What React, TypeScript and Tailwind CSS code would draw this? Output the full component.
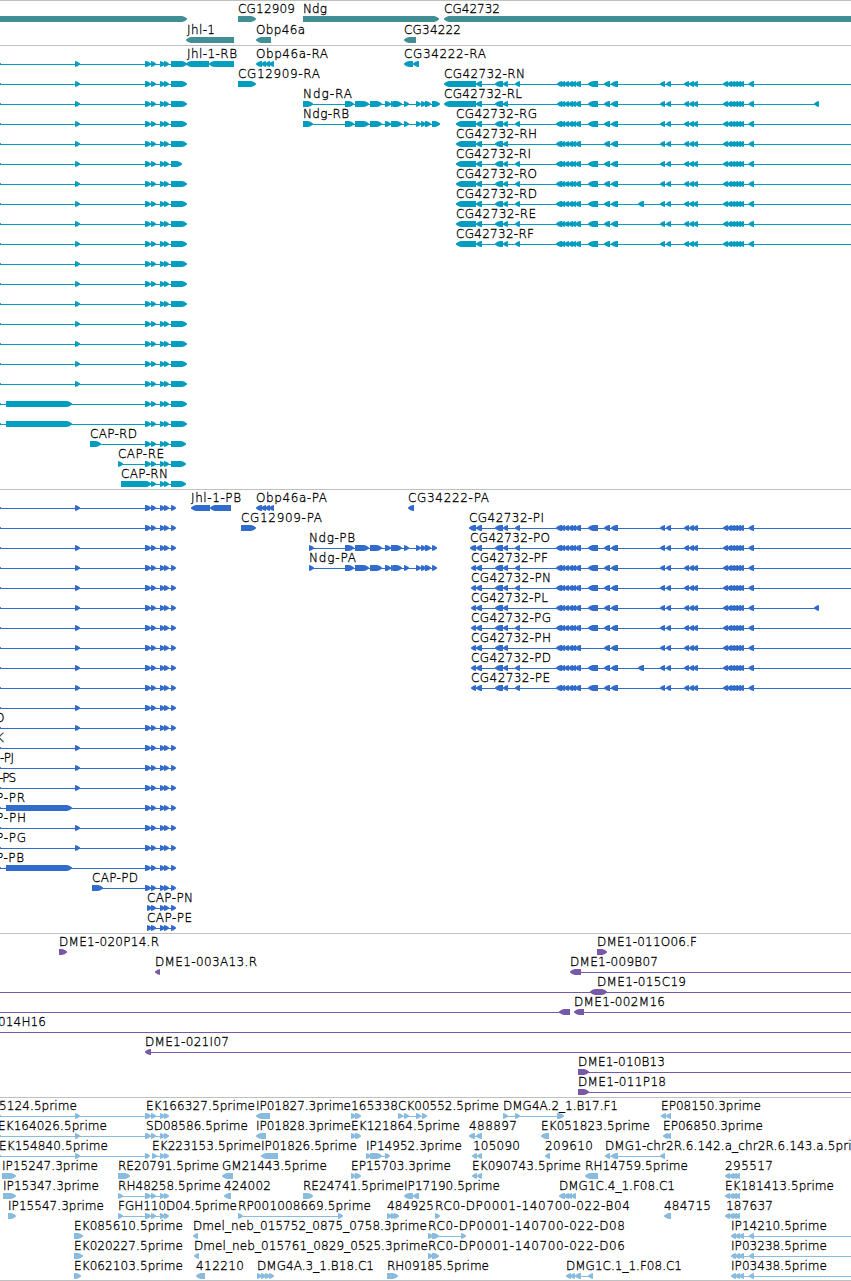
type Dir = 'r' | 'l' | 'b';

type Feature = {
  label?: string;
  // left edge and drawn width of the label
  at?: [number, number];
  dir: Dir;
  line?: [number, number];
  exons: number[][];
};

type Row = Feature[];

const WIDTH = 851;

const f = (
  label: string,
  x: number,
  end: number,
  dir: Dir,
  exons: number[][],
  line?: [number, number],
): Feature => ({ label, at: [x, end - x], dir, exons, line });

const g = (dir: Dir, exons: number[][], line?: [number, number]): Feature => ({ dir, exons, line });

// --- shared exon sets ---
const capMid = [[145, 151], [151, 156], [160, 165], [164, 169]];
const cap = (end: number) => g('r', [[-4, 1], [75, 80], ...capMid, [171, end]], [0, end - 2]);
const capBlock = (end: number) => g('r', [[-4, 1], [6, 72], ...capMid, [171, end]], [0, end - 2]);

const obp = [[256, 262], [261, 266], [265, 270], [269, 274]];
const ndgMid = [[345, 354], [355, 369], [370, 382], [385, 391]];
const ndgTail = [[404, 409], [416, 421], [421, 426], [425, 431]];
const ndgSplit = [[391, 396], [393, 402]];

const cgTail = [
  [604, 610], [611, 618], [660, 665], [666, 671], [684, 689], [689, 694], [693, 698],
  [723, 728], [727, 732], [730, 735], [733, 738], [736, 741], [739, 744], [748.5, 754],
];
const cgCluster = [[560, 565], [564, 569], [568, 573], [571, 576], [575, 581]];

const cg = (
  name: string,
  x: number,
  end: number,
  first: number[][],
  opts: { noSmall?: boolean; noBlock?: boolean; extra?: number[]; stop?: number; cluster?: number } = {},
): Feature =>
  f(
    name, x, end, 'l',
    [
      ...first,
      [476, 482], [495, 503], [503, 508],
      ...(opts.noSmall ? [] : [[515, 520]]),
      [opts.cluster ?? 556, 562],
      ...cgCluster,
      ...(opts.noBlock ? [] : [[588, 598]]),
      ...cgTail,
      ...(opts.extra ? [opts.extra] : []),
    ],
    [first[0][0] + 2, opts.stop ?? WIDTH],
  );

const genes: Row[] = [
  [
    g('r', [[-9, 187]]),
    f('CG12909', 238, 295, 'r', [[238, 256]]),
    f('Ndg', 303, 327, 'r', [[303, 439]]),
    f('CG42732', 444, 500, 'l', [[444, 860]]),
  ],
  [
    f('Jhl-1', 187, 215, 'l', [[186, 234]]),
    f('Obp46a', 256, 305, 'l', [[256, 271]]),
    f('CG34222', 404, 461, 'l', [[404, 416]]),
  ],
];

const transcripts: Row[] = [
  [
    cap(187),
    f('Jhl-1-RB', 187, 237, 'l', [[186, 209], [209, 234]]),
    f('Obp46a-RA', 256, 328, 'l', obp),
    f('CG34222-RA', 404, 486, 'l', [[404, 413], [413, 419]]),
  ],
  [cap(187), f('CG12909-RA', 238, 320, 'r', [[238, 256]]), cg('CG42732-RN', 444, 525, [[444, 476]], { cluster: 557 })],
  [
    cap(187),
    f('Ndg-RA', 303, 352, 'r', [[303, 313], ...ndgMid, ...ndgSplit, ...ndgTail, [432, 440]], [303, 438]),
    cg('CG42732-RL', 444, 522, [[444, 476]], { noSmall: true, extra: [814, 819], stop: 819, cluster: 557 }),
  ],
  [
    cap(187),
    f('Ndg-RB', 303, 349, 'r', [[303, 313], ...ndgMid, [391, 402], ...ndgTail, [432, 440]], [303, 438]),
    cg('CG42732-RG', 456, 537, [[456, 476]]),
  ],
  [cap(187), cg('CG42732-RH', 456, 537, [[456, 476]], { noSmall: true, noBlock: true })],
  [cap(182), cg('CG42732-RI', 456, 531, [[456, 476]])],
  [cap(187), cg('CG42732-RO', 456, 537, [[456, 476]])],
  [cap(187), cg('CG42732-RD', 456, 537, [[456, 476]], { extra: [638, 644] })],
  [cap(187), cg('CG42732-RE', 456, 536, [[456, 476]])],
  [cap(187), cg('CG42732-RF', 456, 534, [[456, 476]])],
  [cap(187)],
  [cap(187)],
  [cap(187)],
  [cap(187)],
  [cap(187)],
  [cap(187)],
  [cap(187)],
  [capBlock(187)],
  [capBlock(187)],
  [f('CAP-RD', 90, 137, 'r', [[90, 101], ...capMid, [171, 186]], [90, 184])],
  [f('CAP-RE', 118, 164, 'r', [[118, 123], ...capMid, [171, 186]], [118, 184])],
  [f('CAP-RN', 121, 168, 'r', [[121, 151], ...capMid, [171, 186]], [121, 184])],
];

const ndgP = (name: string, end: number, mid: number[][]) =>
  f(name, 309, end, 'r', [[309, 314], ...ndgMid, ...mid, ...ndgTail, [432, 437]], [309, 436]);

const capLabelled = (text: string, x: number, end: number, block = false): Feature => ({
  ...(block ? capBlock(176) : cap(176)),
  label: text,
  at: [x, end - x],
});

const proteins: Row[] = [
  [
    cap(176),
    f('Jhl-1-PB', 191, 241, 'l', [[191, 210], [210, 231]]),
    f('Obp46a-PA', 256, 327, 'l', obp),
    f('CG34222-PA', 408, 489, 'l', [[408, 414]]),
  ],
  [
    g('r', [[-4, 1], ...capMid, [171, 176]], [0, 174]),
    f('CG12909-PA', 241, 322, 'r', [[241, 256]]),
    cg('CG42732-PI', 469, 544, [[469, 476]]),
  ],
  [cap(176), ndgP('Ndg-PB', 355, [[391, 402]]), cg('CG42732-PO', 470, 550, [[470, 476]])],
  [cap(176), ndgP('Ndg-PA', 356, ndgSplit), cg('CG42732-PF', 471, 548, [[471, 476]])],
  [cap(176), cg('CG42732-PN', 471, 551, [[471, 476]])],
  [cap(176), cg('CG42732-PL', 471, 548, [[471, 476]], { noSmall: true, extra: [814, 819], stop: 819 })],
  [cap(176), cg('CG42732-PG', 471, 551, [[471, 476]])],
  [cap(176), cg('CG42732-PH', 471, 551, [[471, 476]], { noSmall: true, noBlock: true })],
  [cap(176), cg('CG42732-PD', 471, 551, [[471, 476]], { extra: [638, 644] })],
  [cap(176), cg('CG42732-PE', 471, 550, [[471, 476]])],
  [cap(176)],
  [capLabelled('O', -5, 5)],
  [capLabelled('K', -4, 4)],
  [capLabelled('-PJ', 0, 14)],
  [capLabelled('-PS', -1, 16)],
  [capLabelled('P-PR', -4, 25, true)],
  [capLabelled('P-PH', -4, 26)],
  [capLabelled('P-PG', -4, 26)],
  [capLabelled('P-PB', -4, 24, true)],
  [f('CAP-PD', 92, 138, 'r', [[92, 103], ...capMid, [171, 176]], [92, 174])],
  [f('CAP-PN', 147, 193, 'r', [[147, 152], ...capMid.slice(1), [171, 176]], [147, 174])],
  [f('CAP-PE', 147, 192, 'r', [[147, 152], ...capMid.slice(1), [171, 176]], [147, 174])],
];

const clones: Row[] = [
  [f('DME1-020P14.R', 59, 159, 'r', [[59, 67]]), f('DME1-011O06.F', 597, 697, 'r', [[597, 607]])],
  [f('DME1-003A13.R', 155, 257, 'l', [[155, 160]]), f('DME1-009B07', 570, 658, 'l', [[570, 581]], [572, WIDTH])],
  [f('DME1-015C19', 597, 686, 'b', [[590, 607]], [0, WIDTH])],
  [g('l', [[559, 570]], [0, 570]), f('DME1-002M16', 574, 665, 'l', [[574, 584]], [576, WIDTH])],
  [f('014H16', -2, 46, 'r', [], [0, WIDTH])],
  [f('DME1-021I07', 145, 229, 'l', [[145, 151]], [147, WIDTH])],
  [f('DME1-010B13', 578, 665, 'r', [[578, 589]], [578, WIDTH])],
  [f('DME1-011P18', 578, 666, 'r', [[578, 589]], [578, WIDTH])],
];

const pair351 = [[351, 356], [355, 361]];
const left725 = [[725, 730], [729, 734], [732, 737], [735, 740]];
const ip731 = [[731, 736], [735, 740], [739, 744], [749, 754]];

const ests: Row[] = [
  [
    f('5124.5prime', -1, 77, 'r', [[-4, 1], [75, 80]], [0, 145]),
    f('EK166327.5prime', 146, 255, 'r', capMid, [145, 168]),
    f('IP01827.3prime', 256, 351, 'l', [[256, 270]]),
    f('165338', 351, 398, 'r', pair351),
    f('CK00552.5prime', 398, 499, 'r', [[398, 403], [404, 409], [416, 421], [422, 427]], [398, 425]),
    f('DMG4A.2_1.B17.F1', 503, 618, 'r', [[503, 508], [515, 520], [557, 562], [558, 564]], [503, 562]),
    f('EP08150.3prime', 661, 761, 'l', [[661, 666], [666, 671]]),
  ],
  [
    f('EK164026.5prime', -2, 107, 'r', [[-4, 1], [75, 80]], [0, 145]),
    f('SD08586.5prime', 146, 248, 'r', capMid, [145, 168]),
    f('IP01828.3prime', 256, 351, 'l', [[256, 266]]),
    f('EK121864.5prime', 351, 460, 'r', pair351),
    f('488897', 469, 517, 'l', [[469, 475], [476, 482]], [470, 480]),
    f('EK051823.5prime', 541, 650, 'l', [[541, 549]]),
    f('EP06850.3prime', 663, 763, 'l', [[663, 668], [666, 671]]),
  ],
  [
    f('EK154840.5prime', -1, 108, 'r', [[-4, 1], [75, 80], [145, 150]], [0, 148]),
    f('EK223153.5prime', 152, 261, 'r', [[152, 157], [160, 165], [164, 169]], [152, 168]),
    f('IP01826.5prime', 261, 357, 'l', [[261, 278]]),
    f('IP14952.3prime', 366, 462, 'r', [[366, 371], [370, 382], [385, 390]], [366, 388]),
    f('105090', 473, 520, 'l', [[472, 477], [477, 482]]),
    f('209610', 545, 593, 'l', [[545, 550]]),
    f('DMG1-chr2R.6.142.a_chr2R.6.143.a.5prime', 605, 871, 'l', [[605, 610], [611, 618], [660, 665]], [607, 663]),
  ],
  [
    f('IP15247.3prime', 2, 98, 'r', [[2, 16]]),
    f('RE20791.5prime', 118, 219, 'r', [[118, 130]]),
    f('GM21443.5prime', 222, 327, 'l', [[222, 233]]),
    f('EP15703.3prime', 351, 451, 'r', pair351),
    f('EK090743.5prime', 472, 581, 'l', [[472, 477], [477, 482]]),
    f('RH14759.5prime', 585, 688, 'l', [[585, 598]]),
    f('295517', 725, 773, 'l', left725),
  ],
  [
    f('IP15347.3prime', 3, 99, 'r', [[3, 16]]),
    f('RH48258.5prime', 118, 221, 'r', [[118, 123], ...capMid], [118, 168]),
    f('424002', 224, 271, 'l', [[224, 231]]),
    f('RE24741.5prime', 303, 404, 'r', [[303, 313]]),
    f('IP17190.5prime', 404, 500, 'l', [[404, 413], [413, 419]]),
    f('DMG1C.4_1.F08.C1', 559, 675, 'l', [[559, 565], [564, 569], [567, 572], [571, 576]]),
    f('EK181413.5prime', 725, 834, 'l', left725),
  ],
  [
    f('IP15547.3prime', 8, 104, 'r', [[8, 16]]),
    f('FGH110D04.5prime', 118, 237, 'r', [[118, 123], ...capMid], [118, 168]),
    f('RP001008669.5prime', 238, 371, 'r', [[238, 243], [338, 343]], [238, 341]),
    f('484925', 387, 434, 'r', [[387, 392], [391, 396], [394, 399]]),
    f('RC0-DP0001-140700-022-B04', 435, 630, 'r', [[435, 440]]),
    f('484715', 664, 711, 'l', [[664, 671]]),
    f('187637', 726, 773, 'l', left725),
  ],
  [
    f('EK085610.5prime', 74, 183, 'r', [[74, 83]]),
    f('Dmel_neb_015752_0875_0758.3prime', 193, 427, 'l', [[193, 198]]),
    f('RC0-DP0001-140700-022-D08', 428, 625, 'r', [[428, 433], [432, 439], [461, 466]], [428, 464]),
    f('IP14210.5prime', 731, 827, 'l', ip731, [733, WIDTH]),
  ],
  [
    f('EK020227.5prime', 74, 183, 'r', [[74, 83]]),
    f('Dmel_neb_015761_0829_0525.3prime', 194, 428, 'l', [[194, 199]]),
    f('RC0-DP0001-140700-022-D06', 428, 625, 'r', [[428, 433], [432, 439]]),
    f('IP03238.5prime', 731, 827, 'l', ip731, [733, WIDTH]),
  ],
  [
    f('EK062103.5prime', 74, 183, 'r', [[74, 81]]),
    f('412210', 196, 244, 'l', [[196, 205]]),
    f('DMG4A.3_1.B18.C1', 257, 374, 'r', [[257, 262], [261, 266], [265, 270], [269, 274]]),
    f('RH09185.5prime', 387, 489, 'r', [[387, 398]]),
    f('DMG1C.1_1.F08.C1', 566, 682, 'l', [[566, 571], [570, 575], [575, 581], [588, 593]], [568, 593]),
    f('IP03438.5prime', 731, 827, 'l', ip731, [733, WIDTH]),
  ],
];

// 6px tall block with a 5px tip pointing along the strand
const exonPoints = (x1: number, x2: number, dir: Dir) => {
  const tip = Math.min(5, x2 - x1);
  const left =
    dir === 'r'
      ? `${x1},19 ${x1},13`
      : `${x1 + tip},19 ${x1 + tip / 2},18.2 ${x1},16.5 ${x1},15.5 ${x1 + tip / 2},13.8 ${x1 + tip},13`;
  const right =
    dir === 'l'
      ? `${x2},13 ${x2},19`
      : `${x2 - tip},13 ${x2 - tip / 2},13.8 ${x2},15.5 ${x2},16.5 ${x2 - tip / 2},18.2 ${x2 - tip},19`;
  return `${left} ${right}`;
};

const FeatureGlyph = ({ feature }: { feature: Feature }) => (
  <g>
    {feature.line && (
      <rect x={feature.line[0]} y={16} width={feature.line[1] - feature.line[0]} height={1} />
    )}
    {feature.exons.map(([x1, x2], i) => (
      <polygon key={i} points={exonPoints(x1, x2, feature.dir)} />
    ))}
    {feature.label && feature.at && (
      <text x={feature.at[0]} y={10} textLength={feature.at[1]} className="fill-black stroke-black stroke-[0.3px]">
        {feature.label}
      </text>
    )}
  </g>
);

const Track = ({ rows, className, rowClass = 'h-5' }: { rows: Row[]; className: string; rowClass?: string }) => (
  <section className={`flex flex-col border-t border-[#c0c0c0] pt-0.5 ${className}`}>
    {rows.map((row, i) => (
      <svg key={i} className={`block w-full shrink-0 overflow-visible fill-current ${rowClass}`}>
        {row.map((feature, j) => (
          <FeatureGlyph key={j} feature={feature} />
        ))}
      </svg>
    ))}
  </section>
);

export default function App() {
  return (
    <main className="flex h-[1281px] w-[851px] flex-col overflow-hidden bg-white font-['DejaVu_Sans',sans-serif] text-[12px] font-extralight">
      <Track rows={genes} className="text-[#3f8f94]" rowClass="h-[21px]" />
      <Track rows={transcripts} className="pb-px text-[#039dbf]" />
      <Track rows={proteins} className="pb-px text-[#316bcb]" />
      <Track rows={clones} className="pb-px text-[#7759a8]" />
      <Track rows={ests} className="border-b text-[#88bbdd]" />
    </main>
  );
}
